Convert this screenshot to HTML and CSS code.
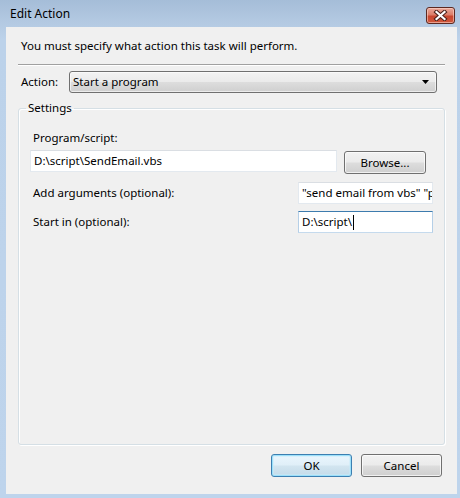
FILE: index.html
```html
<!DOCTYPE html>
<html lang="en">
<head>
<meta charset="utf-8">
<title>Edit Action</title>
<link rel="stylesheet" href="styles.css">
</head>
<body>
<div class="window">
  <div class="titlebar">
    <span class="title">Edit Action</span>
    <div class="close-btn">
      <svg width="15" height="11" viewBox="0 0 15 11">
        <path d="M3.5 2 L11.5 9 M11.5 2 L3.5 9" stroke="#4a2019" stroke-width="4.2" stroke-linecap="square" fill="none"/>
        <path d="M3.5 2 L11.5 9 M11.5 2 L3.5 9" stroke="#ffffff" stroke-width="2.2" stroke-linecap="square" fill="none"/>
      </svg>
    </div>
  </div>
  <div class="client">
    <p class="instruction">You must specify what action this task will perform.</p>
    <div class="separator"></div>
    <div class="action-row">
      <span class="label">Action:</span>
      <div class="combo">
        <span class="combo-text">Start a program</span>
        <svg class="combo-arrow" width="7" height="4" viewBox="0 0 7 4"><path d="M0 0 H7 L3.5 4 Z" fill="#000"/></svg>
      </div>
    </div>
    <fieldset class="group">
      <legend class="legend">Settings</legend>
      <div class="label prog-label">Program/script:</div>
      <div class="prog-row">
        <div class="textbox prog-input">D:\script\SendEmail.vbs</div>
        <div class="button browse">Browse...</div>
      </div>
      <div class="field-row args-row">
        <span class="label">Add arguments (optional):</span>
        <div class="textbox small-input">"send email from vbs" "p</div>
      </div>
      <div class="field-row start-row">
        <span class="label">Start in (optional):</span>
        <div class="textbox small-input focused">D:\script\<span class="caret"></span></div>
      </div>
    </fieldset>
    <div class="footer">
      <div class="button default">OK</div>
      <div class="button">Cancel</div>
    </div>
  </div>
</div>
</body>
</html>
```
FILE: styles.css
```css
* { box-sizing: border-box; }
html, body {
  margin: 0;
  padding: 0;
}
body {
  width: 460px;
  height: 498px;
  overflow: hidden;
  font-family: "Noto Sans", "Open Sans", sans-serif;
  font-size: 11.5px;
  color: #000;
}
.window {
  width: 460px;
  height: 498px;
  display: flex;
  flex-direction: column;
  background: linear-gradient(to bottom, #a5bdd8 0px, #b2c8e1 20px, #bcd2ea 40px, #bed4ec 100%);
}
.titlebar {
  height: 27px;
  display: flex;
  align-items: flex-start;
  padding-left: 10px;
  padding-right: 5px;
}
.title {
  margin-top: 6px;
  line-height: 16px;
  font-size: 12px;
  color: #000;
}
.close-btn {
  margin-left: auto;
  margin-top: 7px;
  width: 29px;
  height: 17px;
  border: 1px solid #5c2a22;
  border-radius: 3px;
  background: linear-gradient(to bottom, #e9a99a 0%, #dc7d68 45%, #c8462e 55%, #d0583d 100%);
  box-shadow: inset 0 0 0 1px rgba(255, 220, 210, 0.55);
  display: flex;
  align-items: center;
  justify-content: center;
}
.close-btn svg { display: block; }
.client {
  flex: 1;
  margin: 0 3px 4px 6px;
  background: #f0f0f0;
  display: flex;
  flex-direction: column;
  padding: 0 12px;
}
.instruction {
  margin: 11px 0 0 3px;
  line-height: 16px;
}
.separator {
  margin-top: 10px;
  height: 2px;
  border-top: 1px solid #a0a0a0;
  border-bottom: 1px solid #ffffff;
}
.action-row {
  margin-top: 5px;
  display: flex;
  align-items: center;
  height: 22px;
}
.label {
  line-height: 16px;
  white-space: nowrap;
}
.action-row .label {
  margin-left: 3px;
  width: 48px;
}
.combo {
  width: 368px;
  height: 22px;
  border: 1px solid #707070;
  border-radius: 3px;
  background: linear-gradient(to bottom, #f3f3f3 0%, #ebebeb 48%, #dddddd 52%, #cfcfcf 100%);
  box-shadow: inset 0 0 0 1px rgba(255, 255, 255, 0.6);
  display: flex;
  align-items: center;
  padding: 0 7px 0 3px;
}
.combo-text { flex: 1; line-height: 16px; }
.combo-arrow { display: block; }
.group {
  margin: 8px 0 0 0;
  padding: 0;
  height: 344px;
  border: 1px solid #d5dfe5;
  border-radius: 3px;
  box-shadow: inset 1px 1px 0 #ffffff, 1px 1px 0 #ffffff;
  min-width: 0;
}
.legend {
  margin-left: 7px;
  padding: 0 2px;
  line-height: 14px;
}
.prog-label {
  margin: 15px 0 0 14px;
}
.prog-row {
  margin-top: 4px;
  display: flex;
  align-items: flex-start;
  padding-left: 11px;
}
.textbox {
  height: 22px;
  background: #ffffff;
  border: 1px solid #e3e9ef;
  border-top-color: #dadee3;
  line-height: 20px;
  padding-left: 3px;
  white-space: nowrap;
  overflow: hidden;
  display: flex;
  align-items: center;
}
.prog-input {
  width: 307px;
}
.browse {
  margin-left: 7px;
  margin-top: 1px;
  width: 88px;
}
.button {
  height: 23px;
  width: 82px;
  border: 1px solid #707070;
  border-radius: 3px;
  background: linear-gradient(to bottom, #f2f2f2 0%, #ebebeb 48%, #dddddd 52%, #cfcfcf 100%);
  box-shadow: inset 0 0 0 1px rgba(255, 255, 255, 0.7);
  display: flex;
  align-items: center;
  justify-content: center;
  line-height: 16px;
}
.field-row {
  display: flex;
  align-items: center;
  padding-left: 14px;
  height: 22px;
}
.field-row .label { flex: 1; }
.args-row { margin-top: 8px; }
.start-row { margin-top: 7px; }
.small-input {
  width: 135px;
  margin-right: 11px;
}
.focused {
  border-color: #c5daed;
  border-top-color: #3d7bad;
  border-left-color: #b5cfe7;
  border-right-color: #b5cfe7;
}
.caret {
  display: inline-block;
  width: 1px;
  height: 15px;
  background: #000;
  margin-left: 1px;
}
.footer {
  margin-top: 9px;
  display: flex;
  justify-content: flex-end;
  gap: 9px;
  padding-right: 3px;
}
.footer .button {
  width: 81px;
}
.default {
  border-color: #3c7fb1;
  box-shadow: inset 0 0 0 1px #9ce0fa, inset 0 0 0 2px rgba(200, 235, 250, 0.5);
  background: linear-gradient(to bottom, #eaf6fd 0%, #e0eff8 48%, #d2e5f0 52%, #c4dbe9 100%);
}
```
